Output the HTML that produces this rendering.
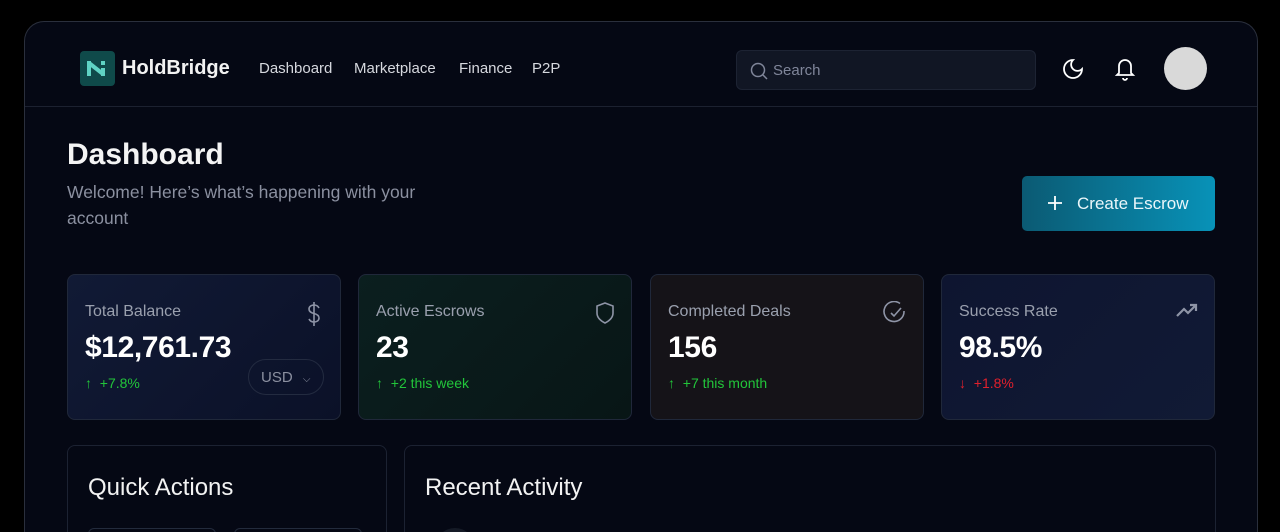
<!DOCTYPE html>
<html style="height:532px;overflow:hidden"><head><style>
*{box-sizing:border-box;margin:0;padding:0}
body{width:1280px;height:532px;background:#000;font-family:"Liberation Sans",sans-serif;overflow:hidden;position:relative;color:#fff}
.panel{position:absolute;left:24px;top:21px;width:1234px;height:540px;background:#050814;border:1px solid #2a2f3c;border-bottom:none;border-radius:20px 20px 0 0;overflow:hidden}
.wrap{position:absolute;left:0;top:0;width:1280px;height:532px;overflow:hidden}
.hdr{position:absolute;left:0;top:0;right:0;height:85px;border-bottom:1px solid #1c2130}
.logo{position:absolute;left:55px;top:29px;width:35px;height:35px;background:#0f4a4a;border-radius:4px}
.brand{position:absolute;left:97px;top:35px;font-size:20px;font-weight:bold;color:#f2f2f2}
.nav{position:absolute;top:38px;font-size:15px;color:#d6d8de}
.search{position:absolute;left:711px;top:28px;width:300px;height:40px;background:#111624;border:1px solid #1d2333;border-radius:6px}
.search span{position:absolute;left:36px;top:11px;font-size:15px;color:#80869a}
.avatar{position:absolute;left:1139px;top:25px;width:43px;height:43px;border-radius:50%;background:#d9d9d9}
h1{position:absolute;left:42px;top:116px;font-size:30px;font-weight:bold;color:#f4f4f4}
.sub{position:absolute;left:42px;top:157px;width:378px;font-size:17.5px;line-height:26px;color:#8b90a0}
.btn{position:absolute;left:997px;top:154px;width:193px;height:55px;border-radius:5px;background:linear-gradient(90deg,#0b5a73,#0892b8);font-size:17px;color:#eaf6fa}
.btn span{position:absolute;left:55px;top:18px}
.card{position:absolute;top:252px;width:274px;height:146px;border:1px solid #20283a;border-radius:8px}
.card .t{position:absolute;left:17px;top:28px;font-size:16px;color:#9aa0ae}
.card .v{position:absolute;left:17px;top:56px;font-size:30px;font-weight:bold;color:#fff;letter-spacing:-0.4px}
.card .d{position:absolute;left:17px;top:100px;font-size:14px;color:#22c53a}
.card svg.ic{position:absolute;right:16px;top:26px}
.box{position:absolute;top:423px;height:140px;border:1px solid #1c2232;border-radius:8px}
.box .h{position:absolute;left:20px;top:28px;font-size:24px;color:#f2f2f2}
</style></head><body><div class="wrap">
<div class="panel">
 <div class="hdr">
  <div class="logo"><svg width="35" height="35" viewBox="0 0 35 35"><path d="M9 10v15M9 12l14 11M23 17v8" stroke="#5fd3c4" stroke-width="4" fill="none"/><rect x="21" y="10" width="4" height="4" fill="#5fd3c4"/></svg></div>
  <div class="brand">HoldBridge</div>
  <div class="nav" style="left:234px">Dashboard</div>
  <div class="nav" style="left:329px">Marketplace</div>
  <div class="nav" style="left:434px">Finance</div>
  <div class="nav" style="left:507px">P2P</div>
  <div class="search"><svg style="position:absolute;left:13px;top:11px" width="18" height="18" viewBox="0 0 18 18"><circle cx="8" cy="8" r="6.5" stroke="#80869a" stroke-width="1.5" fill="none"/><path d="M13 13l4 4" stroke="#80869a" stroke-width="1.5"/></svg><span>Search</span></div>
  <svg style="position:absolute;left:1036px;top:35px" width="24" height="24" viewBox="0 0 24 24"><path d="M12 3a6 6 0 0 0 9 9 9 9 0 1 1-9-9z" stroke="#fff" stroke-width="1.8" fill="none"/></svg>
  <svg style="position:absolute;left:1088px;top:34px" width="24" height="26" viewBox="0 0 24 26"><path d="M6 17V10a6 6 0 0 1 12 0v7l2 2H4z M10 22a2 2 0 0 0 4 0" stroke="#fff" stroke-width="1.8" fill="none"/></svg>
  <div class="avatar"></div>
 </div>
 <h1>Dashboard</h1>
 <div class="sub">Welcome! Here’s what’s happening with your account</div>
 <div class="btn"><svg style="position:absolute;left:25px;top:19px" width="16" height="16" viewBox="0 0 16 16"><path d="M8 1v14M1 8h14" stroke="#fff" stroke-width="1.8"/></svg><span>Create Escrow</span></div>

 <div class="card" style="left:42px;background:linear-gradient(135deg,#111a35,#0b1128)"><div class="t">Total Balance</div><div class="v">$12,761.73</div><div class="d">↑&nbsp; +7.8%</div>
  <svg class="ic" width="20" height="26" viewBox="0 0 20 26"><path d="M10 1v24M15 7c-1-2-3-3-5-3s-5 1-5 4 3 4 5 4.5 5 1.5 5 4.5-3 4-5 4-4-1-5-3" stroke="#8e94a6" stroke-width="1.6" fill="none"/></svg>
  <div style="position:absolute;left:180px;top:84px;width:76px;height:36px;border:1px solid #232b40;border-radius:18px;color:#8b90a0;font-size:15px;padding:9px 0 0 12px">USD <span style="font-size:10px;margin-left:6px">⌵</span></div></div>
 <div class="card" style="left:333px;background:linear-gradient(135deg,#0b1f1f,#081616)"><div class="t">Active Escrows</div><div class="v">23</div><div class="d">↑&nbsp; +2 this week</div>
  <svg class="ic" width="20" height="24" viewBox="0 0 20 24"><path d="M10 2l8 3v7c0 5-4 8-8 10-4-2-8-5-8-10V5z" stroke="#8e94a6" stroke-width="1.6" fill="none"/></svg></div>
 <div class="card" style="left:625px;background:#151318"><div class="t">Completed Deals</div><div class="v">156</div><div class="d">↑&nbsp; +7 this month</div>
  <svg class="ic" width="24" height="24" viewBox="0 0 24 24"><path d="M21 10a10 10 0 1 1-4-7.5" stroke="#8e94a6" stroke-width="1.6" fill="none"/><path d="M8 12l3 3 7-8" stroke="#8e94a6" stroke-width="1.6" fill="none"/></svg></div>
 <div class="card" style="left:916px;background:linear-gradient(135deg,#0e1530,#111a35)"><div class="t">Success Rate</div><div class="v">98.5%</div><div class="d" style="color:#e0202c">↓&nbsp; +1.8%</div>
  <svg class="ic" width="22" height="18" viewBox="0 0 22 18"><path d="M1 15l7-7 4 4 8-8M14 4h6v6" stroke="#8e94a6" stroke-width="2.2" fill="none"/></svg></div>

 <div class="box" style="left:42px;width:320px"><div class="h">Quick Actions</div>
  <div style="position:absolute;left:20px;top:82px;width:128px;height:40px;border:1px solid #232b3c;border-radius:6px"></div>
  <div style="position:absolute;left:166px;top:82px;width:128px;height:40px;border:1px solid #232b3c;border-radius:6px"></div></div>
 <div class="box" style="left:379px;width:812px"><div class="h">Recent Activity</div>
  <div style="position:absolute;left:30px;top:82px;width:40px;height:40px;border-radius:50%;background:#151a26"></div></div>
</div>
</div></body></html>
